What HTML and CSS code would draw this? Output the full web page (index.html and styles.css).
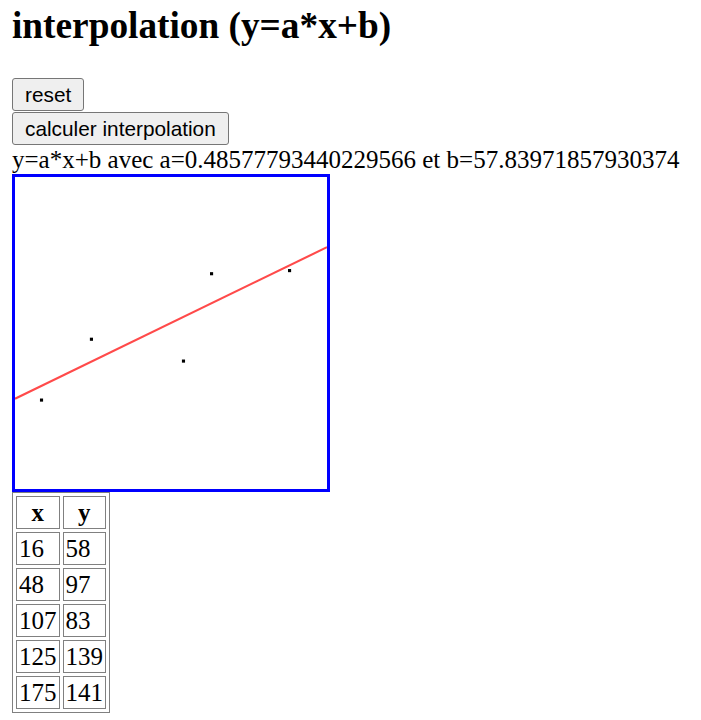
FILE: index.html
```html
<!DOCTYPE html>
<html>
<head>
<meta charset="utf-8">
<link rel="stylesheet" href="styles.css">
</head>
<body>
<h1 class="title">interpolation (y=a*x+b)</h1>
<button class="btn">reset</button>
<button class="btn">calculer interpolation</button>
<div class="result">y=a*x+b avec a=0.48577793440229566 et b=57.83971857930374</div>
<svg class="plot" viewBox="0 0 200 200" width="312" height="312">
  <line x1="0" y1="142.16" x2="200" y2="44.99" stroke="#ff4a4a" stroke-width="1.35"/>
  <rect x="16" y="142" width="2" height="2" fill="#000"/>
  <rect x="48" y="103" width="2" height="2" fill="#000"/>
  <rect x="107" y="117" width="2" height="2" fill="#000"/>
  <rect x="125" y="61" width="2" height="2" fill="#000"/>
  <rect x="175" y="59" width="2" height="2" fill="#000"/>
</svg>
<table class="data">
  <tr><th>x</th><th>y</th></tr>
  <tr><td>16</td><td>58</td></tr>
  <tr><td>48</td><td>97</td></tr>
  <tr><td>107</td><td>83</td></tr>
  <tr><td>125</td><td>139</td></tr>
  <tr><td>175</td><td>141</td></tr>
</table>
</body>
</html>
```

FILE: styles.css
```css
html, body {
  background: #fff;
}
body {
  margin: 4px 12px;
  font-family: "Liberation Serif", "Times New Roman", serif;
  font-size: 25px;
  color: #000;
}
.title {
  margin: 0 0 31px 0;
  font-size: 37.3px;
  font-weight: bold;
}
.btn {
  display: block;
  margin: 0 0 1px 0;
  padding: 3.6px 12px;
  font-family: "Liberation Sans", Arial, sans-serif;
  font-size: 20.8px;
  color: #000;
  background: #efefef;
  border: 1px solid #767676;
  border-radius: 3px;
}
.result {
  line-height: 28px;
}
.plot {
  display: block;
  border: 3px solid #0000ff;
  background: #fff;
}
.data {
  border: 1px solid #808080;
  border-spacing: 3px;
}
.data th, .data td {
  border: 1px solid #808080;
  padding: 1.5px 2px;
  line-height: 28px;
  text-align: left;
}
.data th {
  text-align: center;
}
```
